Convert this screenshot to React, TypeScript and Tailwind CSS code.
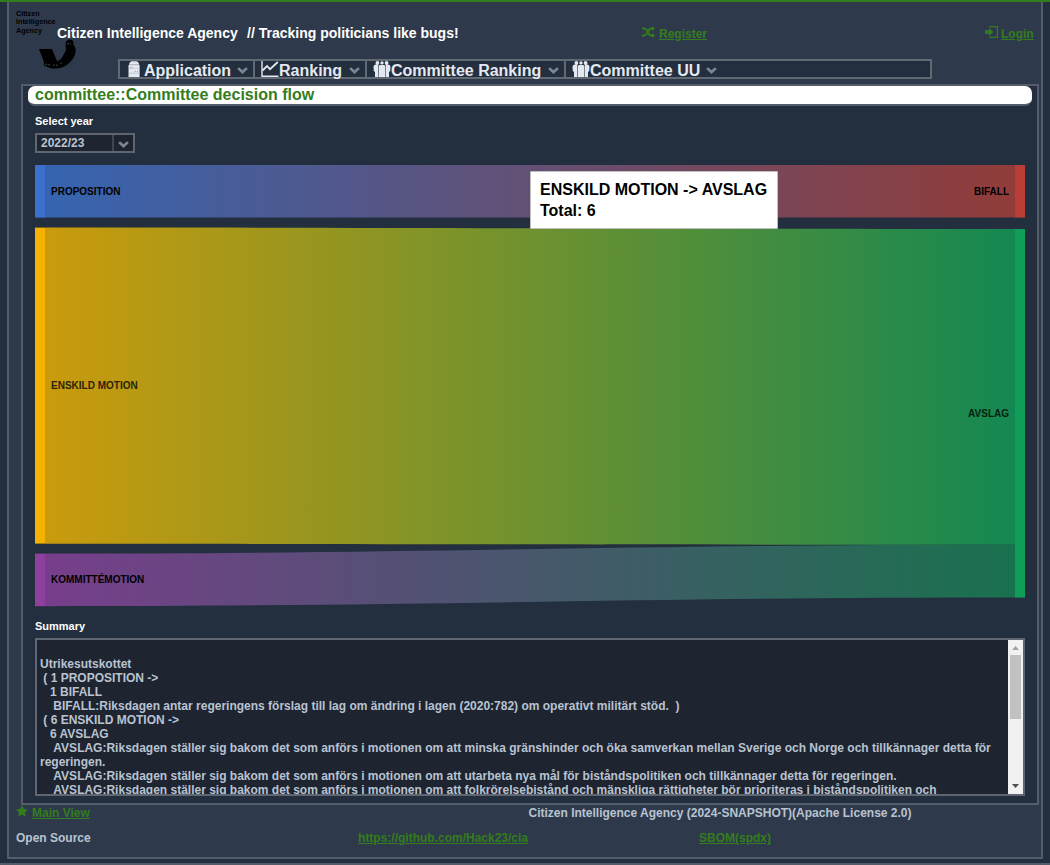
import React from "react";

const Chevron = ({ className }: { className: string }) => (
  <svg className={className} width="11" height="7" viewBox="0 0 11 7">
    <path d="M0.2 1.9 L2 0.2 L5.5 3.3 L9 0.2 L10.8 1.9 L5.5 6.9 Z" fill="currentColor" />
  </svg>
);

const ServerIcon = () => (
  <svg width="12" height="16" viewBox="0 0 12 16" className="shrink-0">
    <path d="M1 3.8 Q1.6 0.2 4 0.2 H8 Q10.6 0.2 11.2 3.8 Z" fill="#e4e8f0" />
    <path d="M0.5 4 H11.6 V16 H0.5 Z" fill="#e4e8f0" />
    <path d="M1 3.6 H11 V4.2 H1 Z M1 7.4 H11.6 V8.1 H1 Z M1 11.8 H11.6 V12.5 H1 Z" fill="#b3bbc8" />
    <path d="M2 6 H5 V6.6 H2 Z M7 10.2 H8 V10.9 H7 Z M9 10.2 H10 V10.9 H9 Z" fill="#8791a1" />
  </svg>
);

const ChartIcon = () => (
  <svg width="18" height="16" viewBox="0 0 18 16" className="shrink-0" fill="none" stroke="#e4e8f0">
    <path d="M1 0 V15.3 H17.5" strokeWidth="1.4" />
    <path d="M1.6 9.5 L6 5 L9 8.2 L16.8 1" strokeWidth="1.8" />
  </svg>
);

const GroupIcon = () => (
  <svg width="18" height="16" viewBox="0 0 18 16" className="shrink-0" fill="#e4e8f0">
    <circle cx="4.4" cy="2" r="1.9" />
    <circle cx="9" cy="1.9" r="1.7" />
    <circle cx="13.6" cy="2" r="1.9" />
    <path d="M0.5 5.5 Q1 3.6 3 3.6 H5.2 V16 H2 V10.8 L0.8 10.2 Z" />
    <path d="M5.7 5 Q6 3.9 7.5 3.9 H10.5 Q12 3.9 12.3 5 V16 H5.7 Z" />
    <path d="M17.5 5.5 Q17 3.6 15 3.6 H12.8 V16 H16 V10.8 L17.2 10.2 Z" />
  </svg>
);

const ShuffleIcon = () => (
  <svg width="13" height="12" viewBox="0 0 13 12" className="shrink-0" fill="none" stroke="currentColor" strokeWidth="1.9">
    <path d="M0 2.5 H2.5 C5.5 2.5 6.2 9.5 9 9.5 H10.5" />
    <path d="M0 9.5 H2.5 C5.5 9.5 6.2 2.5 9 2.5 H10.5" />
    <path d="M10 0 L13 2.5 L10 5 Z M10 7 L13 9.5 L10 12 Z" fill="currentColor" stroke="none" />
  </svg>
);

const LoginIcon = () => (
  <svg width="13" height="12" viewBox="0 0 13 12" className="shrink-0">
    <path d="M0 4.3 H4 V2 L8.4 6 L4 10 V7.7 H0 Z" fill="currentColor" />
    <path d="M5 1.5 V0.6 H12.4 V11.4 H5 V10.5" fill="none" stroke="currentColor" strokeWidth="1.2" />
  </svg>
);

const StarIcon = () => (
  <svg width="12" height="12" viewBox="0 0 12 12" className="shrink-0">
    <path d="M6 0 L7.8 4 L12 4.4 L8.9 7.3 L9.9 11.8 L6 9.5 L2.1 11.8 L3.1 7.3 L0 4.4 L4.2 4 Z" fill="currentColor" />
  </svg>
);

const Logo = () => (
  <div className="absolute left-[7px] top-[8px] h-[62px] w-[62px] text-[7.2px] leading-[8.4px] font-bold text-black">
    <div>Citizen</div>
    <div>Intelligence</div>
    <div>Agency</div>
    <svg className="absolute top-[29px] left-[23px]" width="38" height="31" viewBox="0 0 38 31">
      <path
        d="M0 10 L13 10 L18 22 C22 21.5 24 17 26.5 12 C27.5 9 26 5 27 3 C28 0 33 -0.5 34.5 3 L34.5 6 C37.5 8 37 13 35.5 17 C33 22 28 27 23 28.5 C17 30.5 10 29.5 6 27 Q4 26 5 23 Z"
        fill="#000"
      />
      <path d="M6 25 L12 26.3 M14 26 L19 26.2 M21 25 L24 23.5 M28 4.5 L32 5" stroke="#4b5562" strokeWidth="0.8" strokeDasharray="2 1" />
    </svg>
  </div>
);

const menu = [
  { label: "Application", icon: <ServerIcon />, box: "w-[135px] pl-[8px] gap-[4px]" },
  { label: "Ranking", icon: <ChartIcon />, box: "w-[112px] pl-[6px]" },
  { label: "Committee Ranking", icon: <GroupIcon />, box: "w-[199px] pl-[6px]" },
];

const summary = `
Utrikesutskottet
 ( 1 PROPOSITION ->
   1 BIFALL
    BIFALL:Riksdagen antar regeringens förslag till lag om ändring i lagen (2020:782) om operativt militärt stöd.  )
 ( 6 ENSKILD MOTION ->
   6 AVSLAG
    AVSLAG:Riksdagen ställer sig bakom det som anförs i motionen om att minska gränshinder och öka samverkan mellan Sverige och Norge och tillkännager detta för regeringen.
    AVSLAG:Riksdagen ställer sig bakom det som anförs i motionen om att utarbeta nya mål för biståndspolitiken och tillkännager detta för regeringen.
    AVSLAG:Riksdagen ställer sig bakom det som anförs i motionen om att folkrörelsebistånd och mänskliga rättigheter bör prioriteras i biståndspolitiken och`;

const Sankey = () => (
  <svg width="990" height="442" viewBox="0 0 990 442" className="block text-[10px] font-bold">
    <defs>
      <linearGradient id="prop">
        <stop offset="0" stopColor="#3664b0" />
        <stop offset="1" stopColor="#913c39" />
      </linearGradient>
      <linearGradient id="motion">
        <stop offset="0" stopColor="#ca9b0c" />
        <stop offset="1" stopColor="#148852" />
      </linearGradient>
      <linearGradient id="committee">
        <stop offset="0" stopColor="#773e8b" />
        <stop offset="1" stopColor="#19714e" />
      </linearGradient>
    </defs>
    <path d="M10 0 H980 V52.6 H10 Z" fill="url(#prop)" />
    <path d="M10 62.6 C398 62.6 592 64 980 64 V379.8 C592 379.8 398 378.8 10 378.8 Z" fill="url(#motion)" />
    <path d="M10 388.6 C398 388.6 592 379.8 980 379.8 V432.6 C592 432.6 398 441.2 10 441.2 Z" fill="url(#committee)" />
    <rect x="0" y="0" width="10" height="52.6" fill="#3b70cd" />
    <rect x="0" y="62.6" width="10" height="316" fill="#f6b201" />
    <rect x="0" y="388.6" width="10" height="52.6" fill="#8f409f" />
    <rect x="980" y="0" width="10" height="52.6" fill="#b83e36" />
    <rect x="980" y="64" width="10" height="368.6" fill="#109d58" />
    <text x="16" y="30">PROPOSITION</text>
    <text x="16" y="224" fill="#2c2308">ENSKILD MOTION</text>
    <text x="16" y="418">KOMMITTÉMOTION</text>
    <text x="974" y="30" textAnchor="end">BIFALL</text>
    <text x="974" y="252" textAnchor="end" fill="#06210f">AVSLAG</text>
  </svg>
);

export default function App() {
  return (
    <div className="flex h-[865px] w-[1050px] flex-col overflow-hidden border-t-2 border-b-2 border-t-[#347d1c] border-b-[#535c68] bg-[#232e3e] font-['Liberation_Sans',Arial,sans-serif] font-bold">
      <div className="relative ml-[7px] flex h-[857px] w-[1036px] shrink-0 flex-col border-x-2 border-b-2 border-[#535c68] bg-[#2e3a4b]">
        <Logo />
        <header className="flex h-[82px] shrink-0 flex-col">
          <div className="relative flex h-[57px] items-start pt-[22px] pl-[48px] text-[14px] leading-[18px] text-white">
            <div className="w-[190px]">Citizen Intelligence Agency</div>
            <div className="w-[395px]">// Tracking politicians like bugs!</div>
            <div className="flex w-[343px] gap-[4px] pt-[2px] text-[12px] leading-[16px] text-[#347d1c]">
              <ShuffleIcon />
              <a className="underline">Register</a>
            </div>
            <div className="flex gap-[3px] pt-[2px] text-[12px] leading-[16px] text-[#347d1c]">
              <LoginIcon />
              <a className="underline">Login</a>
            </div>
          </div>
          <nav className="ml-[109px] flex h-[20px] w-[814px] border-2 border-[#616a73] bg-[#232e3e] text-[16px] leading-[18px] text-[#e4e8f0]">
            {menu.map((m) => (
              <div key={m.label} className={`flex h-[16px] items-start border-r-2 border-[#616a73] ${m.box}`}>
                {m.icon}
                <span className="pt-px whitespace-nowrap">{m.label}</span>
                <Chevron className="mt-[6px] mr-[5px] ml-auto shrink-0 text-[#7d8791]" />
              </div>
            ))}
            <div className="flex h-[16px] items-start pl-[6px]">
              <GroupIcon />
              <span className="pt-px whitespace-nowrap">Committee UU</span>
              <Chevron className="mt-[6px] ml-[6px] shrink-0 text-[#7d8791]" />
            </div>
          </nav>
        </header>

        <main className="ml-[12px] flex h-[721px] w-[1018px] shrink-0 flex-col border-2 border-[#535c68] bg-[#232e3e]">
          <h1 className="ml-[5px] h-[20px] w-[1004px] rounded-[7px] border-b-2 border-[#535c68] bg-white pl-[7px] text-[16px] leading-[18px] text-[#347d1c]">
            committee::Committee decision flow
          </h1>
          <div className="flex flex-col pl-[12px]">
            <label className="mt-[8px] h-[14px] text-[11px] leading-[14px] text-white">Select year</label>
            <div className="mt-[5px] flex h-[20px] w-[100px] border-2 border-[#5f6670] bg-[#1e2430] text-[12px] leading-[16px] text-[#b9c3d0]">
              <span className="w-[75px] pl-[4px]">2022/23</span>
              <div className="flex flex-1 items-center justify-center border-l-2 border-[#3f4752] pt-[2px]">
                <Chevron className="text-[#7d8791]" />
              </div>
            </div>
            <div className="relative mt-[12px] h-[442px] w-[990px]">
              <Sankey />
              <div className="absolute top-[6px] left-[495px] h-[58px] w-[248px] rounded-[1px] border border-[#c0c0c0] bg-white pt-[7px] pl-[9px] text-[16px] leading-[21px] text-black">
                <div className="whitespace-nowrap">ENSKILD MOTION -&gt; AVSLAG</div>
                <div>Total: 6</div>
              </div>
            </div>
            <div className="mt-[12px] h-[14px] text-[11px] leading-[14px] text-white">Summary</div>
            <div className="mt-[5px] flex h-[158px] w-[990px] overflow-hidden border-2 border-[#5f6670] bg-[#1e2430]">
              <div className="flex-1 overflow-hidden pt-[3px] pr-[3px] pl-[3px] text-[12px] leading-[14px] whitespace-pre-wrap text-[#b9c3d0]">
                {summary}
              </div>
              <div className="flex w-[15px] shrink-0 flex-col items-center bg-[#f1f1f1]">
                <svg width="15" height="15" viewBox="0 0 15 15">
                  <path d="M4 10 L7.5 6 L11 10 Z" fill="#a3a3a3" />
                </svg>
                <div className="h-[64px] w-[11px] bg-[#c1c1c1]" />
                <svg className="mt-auto" width="15" height="15" viewBox="0 0 15 15">
                  <path d="M4 5 L7.5 9 L11 5 Z" fill="#505050" />
                </svg>
              </div>
            </div>
          </div>
        </main>

        <footer className="flex flex-col pl-[7px] text-[12px] leading-[16px] text-[#b9c3d0]">
          <div className="flex h-[25px]">
            <div className="flex w-[512.5px] gap-[4px] text-[#347d1c]">
              <StarIcon />
              <a className="underline">Main View</a>
            </div>
            <div>Citizen Intelligence Agency (2024-SNAPSHOT)(Apache License 2.0)</div>
          </div>
          <div className="flex">
            <div className="w-[342px]">Open Source</div>
            <a className="w-[341px] text-[#347d1c] underline">https://github.com/Hack23/cia</a>
            <a className="text-[#347d1c] underline">SBOM(spdx)</a>
          </div>
        </footer>
      </div>
    </div>
  );
}
